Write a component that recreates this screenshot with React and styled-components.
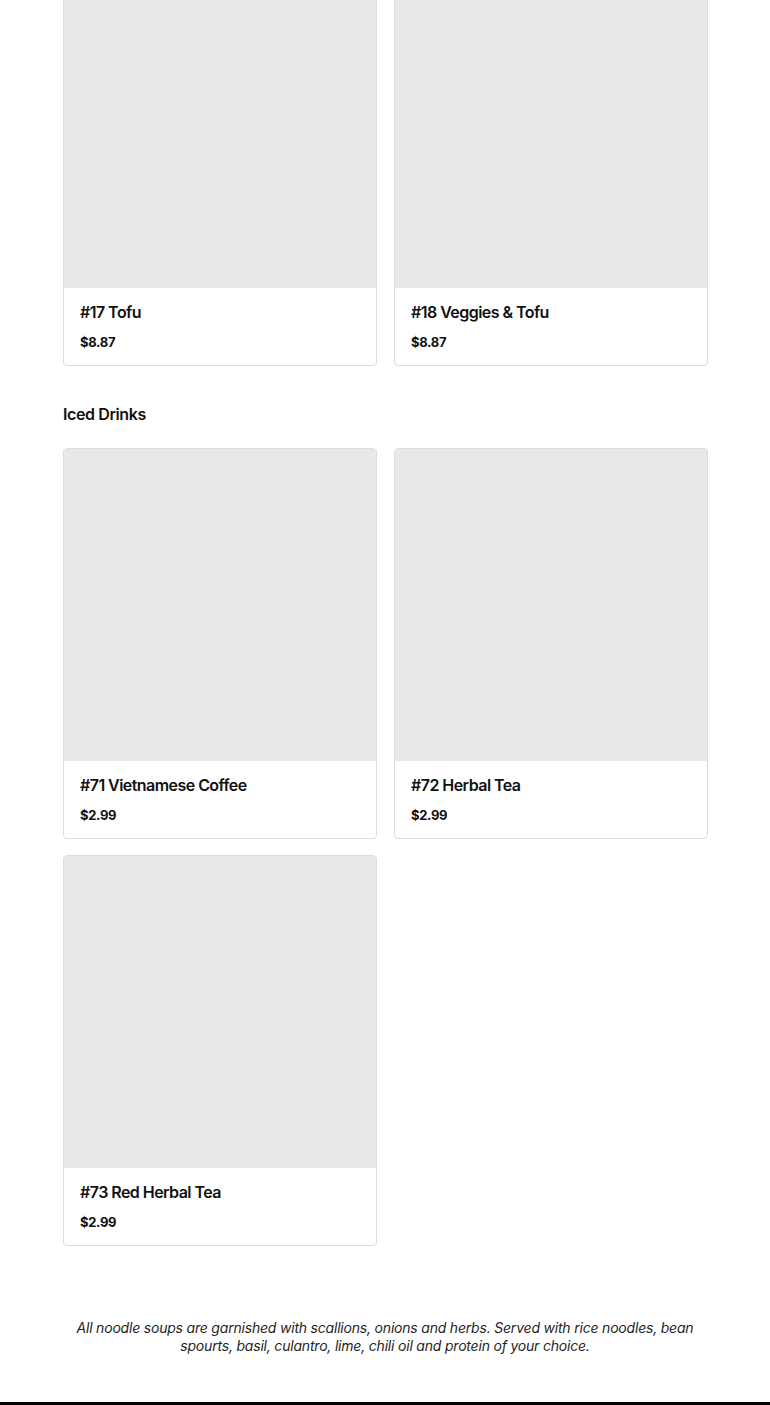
import React from "react";
import styled, { createGlobalStyle } from "styled-components";

const menu = [
    {
        title: null,
        items: [
            {name: "#17 Tofu", price: "$8.87"},
            {name: "#18 Veggies & Tofu", price: "$8.87"},
        ],
    },
    {
        title: "Iced Drinks",
        items: [
            {name: "#71 Vietnamese Coffee", price: "$2.99"},
            {name: "#72 Herbal Tea", price: "$2.99"},
            {name: "#73 Red Herbal Tea", price: "$2.99"},
        ],
    },
];

const App = () => {
    return (
        <>
            <GlobalStyle />
            <Page>
                <Menu>
                    {menu.map((section, index) => (
                        <Section key={index}>
                            {section.title && <SectionTitle>{section.title}</SectionTitle>}
                            <CardGrid>
                                {section.items.map((item) => (
                                    <Card key={item.name}>
                                        <Thumb />
                                        <CardBody>
                                            <ItemName>{item.name}</ItemName>
                                            <ItemPrice>{item.price}</ItemPrice>
                                        </CardBody>
                                    </Card>
                                ))}
                            </CardGrid>
                        </Section>
                    ))}
                </Menu>
                <Note>
                    All noodle soups are garnished with scallions, onions and herbs. Served with rice noodles, bean
                    spourts, basil, culantro, lime, chili oil and protein of your choice.
                </Note>
                <Footer />
            </Page>
        </>
    );
};

const GlobalStyle = createGlobalStyle`
  body{
    margin:0;
    background:#fff;
    color:#111;
    font-family: Inter, "Noto Sans", sans-serif;
  }
`;

const Page = styled.div`
  overflow:hidden;
`;

const Menu = styled.main`
  width:645px;
  margin:-25px 0 0 calc(50% - 322px);
`;

const Section = styled.section`
  & + &{margin-top:38px;}
`;

const SectionTitle = styled.h2`
  margin:0 0 24px;
  font-size:16px;
  line-height:20px;
  font-weight:600;
  letter-spacing:-0.4px;
`;

const CardGrid = styled.div`
  display:grid;
  grid-template-columns:repeat(2, 314px);
  column-gap:17px;
  row-gap:16px;
`;

const Card = styled.article`
  border:1px solid #dcdcdc;
  border-radius:4px;
  overflow:hidden;
  background:#fff;
`;

const Thumb = styled.div`
  height:312px;
  background:#e8e8e8;
`;

const CardBody = styled.div`
  padding:14px 16px;
`;

const ItemName = styled.h3`
  margin:0;
  font-size:16px;
  line-height:20px;
  font-weight:600;
  letter-spacing:-0.55px;
`;

const ItemPrice = styled.p`
  margin:11px 0 0;
  font-size:13px;
  line-height:18px;
  font-weight:700;
  letter-spacing:-0.3px;
`;

const Note = styled.p`
  width:640px;
  margin:73px auto 47px;
  text-align:center;
  font-style:italic;
  font-size:14px;
  line-height:18px;
  letter-spacing:-0.2px;
  color:#1f1f1f;
`;

const Footer = styled.footer`
  height:60px;
  background:#000;
`;

export default App;
